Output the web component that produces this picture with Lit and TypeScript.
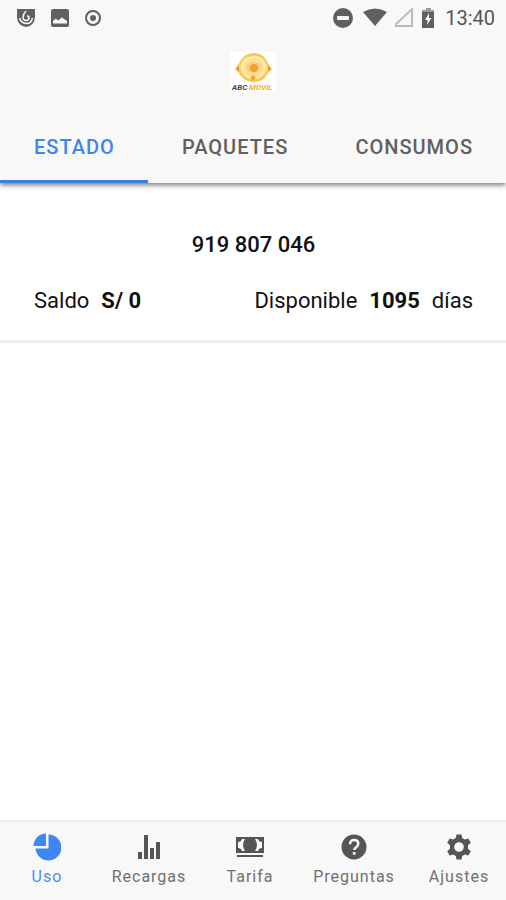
import { LitElement, html, css, svg } from "lit";
import { customElement, state } from "lit/decorators.js";
import { classMap } from "lit/directives/class-map.js";

const icons = {
  uso: svg`<path d="M15.5 1.5A13 13 0 1 1 2.5 15.5H15.5Z"/><path d="M13 0.5V13H0.5A12.5 12.5 0 0 1 13 .5Z"/>`,
  recargas: svg`<path d="M3 19h4v7H3ZM9 2h4v24H9ZM15 15h4v11h-4ZM21 9h4v17h-4Z"/>`,
  tarifa: svg`<path fill-rule="evenodd" d="M0 4H28V20H0ZM2 9V15Q5 15 6 18H9Q5 12 9 6H6Q5 9 2 9ZM26 9V15Q23 15 22 18H19Q23 12 19 6H22Q23 9 26 9Z"/><path d="M1 22H27V24H1Z"/>`,
  preguntas: svg`<circle cx="14" cy="14" r="12.5"/><path d="M10 11.2C10 8.5 11.6 7 14.1 7s4.2 1.5 4.2 3.8c0 3.4-4 3.3-4 6.2" fill="none" stroke="#f8f8f8" stroke-width="2.5"/><path d="M12.8 19h2.8v2.7h-2.8Z" fill="#f8f8f8"/>`,
  ajustes: svg`<path fill-rule="evenodd" d="M11.5 1.500h5l.7 3.600 2.600 1.500 3.500-1.200 2.500 4.300-2.800 2.500v3.600l2.800 2.500-2.500 4.300-3.500-1.200-2.600 1.500-.7 3.600h-5l-.7-3.600-2.600-1.500-3.500 1.200-2.500-4.300L5 15.800v-3.600L2.200 9.700l2.500-4.300 3.500 1.200 2.600-1.500ZM14 9.200a4.800 4.800 0 1 0 0 9.600 4.800 4.800 0 0 0 0-9.600Z"/>`,
};

const sections = [
  { id: "uso", label: "Uso" },
  { id: "recargas", label: "Recargas" },
  { id: "tarifa", label: "Tarifa" },
  { id: "preguntas", label: "Preguntas" },
  { id: "ajustes", label: "Ajustes" },
] as const;

@customElement("status-bar")
export class StatusBar extends LitElement {
  static styles = css`
    :host {
      display: flex;
      align-items: center;
      justify-content: space-between;
      height: 36px;
      padding: 0 11px 0 16px;
      color: #555;
      font-size: 20px;
      line-height: 24px;
    }
    .group {
      display: flex;
      align-items: center;
    }
    .left {
      gap: 14px;
    }
    .right {
      gap: 8px;
    }
    svg {
      display: block;
      fill: #606060;
    }
  `;

  render() {
    return html`
      <div class="group left">
        <svg width="20" height="20" viewBox="0 0 20 20" aria-hidden="true">
          <path d="M1 1H19V9A9 10 0 0 1 1 9Z" />
          <path d="M10 3Q7 6 7 9.500a3 3 0 0 0 6 0Q13 8 11 8" fill="none" stroke="#f8f8f8" stroke-width="1.500" />
          <path d="M3.500 10Q5 15 10 15.500T16.500 10" fill="none" stroke="#f8f8f8" stroke-width="1.500" />
        </svg>
        <svg width="20" height="20" viewBox="0 0 20 20" aria-hidden="true">
          <rect x="1" y="1" width="18" height="18" rx="2" />
          <path d="M3 15.500V13L6 10.500 8 12.500 12 9.500 17 13V15.500Z" fill="#f8f8f8" />
        </svg>
        <svg width="20" height="20" viewBox="0 0 20 20" aria-hidden="true">
          <circle cx="9" cy="10" r="7" fill="none" stroke="#606060" stroke-width="2" />
          <circle cx="9" cy="10" r="3" />
        </svg>
      </div>
      <div class="group right">
        <svg width="22" height="20" viewBox="0 0 22 20" aria-hidden="true">
          <circle cx="12" cy="10" r="10" />
          <rect x="6" y="8" width="12" height="4" rx="1" fill="#f8f8f8" />
        </svg>
        <svg width="26" height="20" viewBox="0 0 26 20" aria-hidden="true">
          <path d="M2 4Q14-3 26 4L14 18Z" />
        </svg>
        <svg width="18" height="20" viewBox="0 0 18 20" aria-hidden="true">
          <path d="M-1 18H17V1Z" fill="none" stroke="#bbb" stroke-width="2" />
        </svg>
        <svg width="16" height="20" viewBox="0 0 16 20" aria-hidden="true">
          <path d="M5 0h5v2h3v3H1V2h4Z" fill="#999" />
          <path d="M1 4h12v16H1Z" />
          <path d="M8 5 4 12h2.500L6 17l4.500-7H8Z" fill="#f8f8f8" />
        </svg>
        <span>13:40</span>
      </div>
    `;
  }
}

@customElement("app-root")
export class AppRoot extends LitElement {
  @state() private tab = "ESTADO";
  @state() private section = "uso";

  static styles = css`
    :host {
      display: flex;
      flex-direction: column;
      min-height: 100vh;
      background: #fff;
      color: #111;
      font-family: Roboto, "Liberation Sans", sans-serif;
    }
    button {
      margin: 0;
      border: 0;
      background: none;
      font: inherit;
      color: inherit;
      cursor: pointer;
    }
    header {
      background: #f8f8f8;
      box-shadow: 0 2px 5px rgba(0, 0, 0, 0.55);
    }
    .brand {
      display: flex;
      justify-content: center;
      padding: 16px 0 18px;
    }
    .logo {
      display: block;
      background: #fff;
    }
    .word {
      font-size: 8px;
      font-weight: 700;
      font-style: italic;
    }
    .tabs {
      display: flex;
      justify-content: space-between;
      height: 73px;
    }
    .tab {
      padding: 0 33px 0 34px;
      border-top: 3px solid transparent;
      border-bottom: 3px solid transparent;
      color: #606060;
      font-size: 20px;
      line-height: 24px;
      font-weight: 500;
      letter-spacing: 1px;
    }
    .tab.active {
      color: #3f85ee;
      border-bottom-color: #3880e0;
    }
    main {
      flex: 1;
    }
    .account {
      padding: 47px 33px 24px 34px;
      border-bottom: 3px solid #eee;
      font-size: 22px;
      line-height: 30px;
    }
    .number {
      margin: 0 0 26px;
      font-size: 22px;
      line-height: 30px;
      font-weight: 500;
      text-align: center;
    }
    .balance {
      display: flex;
      justify-content: space-between;
    }
    .pair {
      display: flex;
      gap: 12px;
    }
    strong {
      font-weight: 700;
    }
    .sections {
      display: grid;
      grid-template-columns: 94fr 110fr 92fr 116fr 94fr;
      height: 78px;
      border-top: 2px solid #eee;
      background: #f8f8f8;
    }
    .section {
      display: flex;
      flex-direction: column;
      align-items: center;
      gap: 6px;
      padding: 11px 0 0;
      color: #707070;
      font-size: 16px;
      line-height: 20px;
      letter-spacing: 1px;
    }
    .section svg {
      display: block;
      fill: #555;
    }
    .section.active {
      color: #4a8cf5;
    }
    .section.active svg {
      fill: #3f87f5;
    }
  `;

  render() {
    return html`
      <header>
        <status-bar></status-bar>
        <div class="brand">
          <svg class="logo" width="46" height="40" viewBox="0 0 46 40" role="img" aria-label="Móvil">
            <defs>
              <radialGradient id="sun">
                <stop offset="0" stop-color="#f6b04a" />
                <stop offset="0.500" stop-color="#fce39a" />
                <stop offset="1" stop-color="#f6bf3c" />
              </radialGradient>
            </defs>
            <path d="M5 17Q8 14 9 11Q14 1 24 1T38 11Q39 14 42 17Q39 19 37 23Q33 30 24 30T10 23Q8 19 5 17Z" fill="url(#sun)" />
            <path d="M12 16Q14 5 24 5T35 16Q33 25 24 26T12 16Z" fill="none" stroke="#fdeeb8" stroke-width="2" />
            <circle cx="24" cy="16" r="4" fill="#f2a236" />
            <path d="M20 26l3-3 3 3-3 3Z" fill="#f2a83a" />
            <path d="M6 17l3-4v7ZM41 17l-3-4v7Z" fill="#f0982a" />
            <text class="word" x="2" y="38" fill="#444">ABC</text>
            <text class="word" x="19" y="38" fill="#f3ad28">MOVIL</text>
          </svg>
        </div>
        <div class="tabs" role="tablist">
          ${["ESTADO", "PAQUETES", "CONSUMOS"].map(
            (name) => html`<button
              role="tab"
              aria-selected=${this.tab === name}
              class=${classMap({ tab: true, active: this.tab === name })}
              @click=${() => (this.tab = name)}
            >${name}</button>`
          )}
        </div>
      </header>
      <main>
        <section class="account">
          <h1 class="number">919 807 046</h1>
          <div class="balance">
            <div class="pair"><span>Saldo</span><strong>S/ 0</strong></div>
            <div class="pair"><span>Disponible</span><strong>1095</strong><span>días</span></div>
          </div>
        </section>
      </main>
      <nav class="sections">
        ${sections.map(
          ({ id, label }) => html`<button
            class=${classMap({ section: true, active: this.section === id })}
            @click=${() => (this.section = id)}
          >
            <svg width="28" height="28" viewBox="0 0 28 28" aria-hidden="true">${icons[id]}</svg>
            <span>${label}</span>
          </button>`
        )}
      </nav>
    `;
  }
}
